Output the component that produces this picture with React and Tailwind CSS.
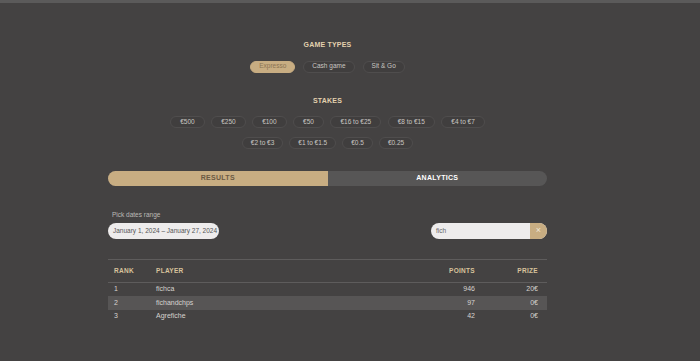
const gameTypes = ["Expresso", "Cash game", "Sit & Go"];
const stakesTop = ["€500", "€250", "€100", "€50", "€16 to €25", "€8 to €15", "€4 to €7"];
const stakesBottom = ["€2 to €3", "€1 to €1.5", "€0.5", "€0.25"];

const rows = [
  { rank: 1, player: "fichca", points: 946, prize: "20€" },
  { rank: 2, player: "fichandchps", points: 97, prize: "0€" },
  { rank: 3, player: "Agrefiche", points: 42, prize: "0€" },
];

function Pill({ label, active, wide }) {
  return (
    <button
      type="button"
      className={`h-[12px] rounded-full border text-[6.5px] leading-none ${wide ? "px-[9px]" : "px-[8px]"} ${
        active
          ? "bg-[#c8ad82] border-[#c8ad82] text-[#8a7352]"
          : "bg-[#403e3e] border-[#4f4d4d] text-[#c9c6c2]"
      }`}
    >
      {label}
    </button>
  );
}

export default function App() {
  return (
    <div
      className="w-[700px] h-[361px] bg-[#444242] overflow-hidden"
      style={{ fontFamily: "'Liberation Sans', Arial, sans-serif" }}
    >
      {/* top strip */}
      <div className="h-[3px] bg-[#5b5a5a]" />

      <div className="ml-[108px] w-[439px] flex flex-col">
        {/* Game types */}
        <h3 className="mt-[37px] text-center text-[7px] font-black tracking-[0.2px] text-[#e3d1ae]">
          GAME TYPES
        </h3>
        <div className="mt-[10px] flex justify-center gap-[8px]">
          {gameTypes.map((g, i) => (
            <Pill key={g} label={g} active={i === 0} />
          ))}
        </div>

        {/* Stakes */}
        <h3 className="mt-[23px] text-center text-[7px] font-black tracking-[0.2px] text-[#e3d1ae]">
          STAKES
        </h3>
        <div className="mt-[10px] flex justify-center gap-[6.5px]">
          {stakesTop.map((s) => (
            <Pill key={s} label={s} wide />
          ))}
        </div>
        <div className="mt-[9px] flex justify-center gap-[6px]">
          {stakesBottom.map((s) => (
            <Pill key={s} label={s} />
          ))}
        </div>

        {/* Tabs */}
        <div className="mt-[22px] flex h-[15px] rounded-full overflow-hidden bg-[#575656]">
          <button
            type="button"
            className="w-1/2 bg-[#c8ad82] text-[7px] font-black tracking-[0.3px] text-[#6b5a44]"
          >
            RESULTS
          </button>
          <button
            type="button"
            className="w-1/2 text-[7px] font-black tracking-[0.3px] text-white"
          >
            ANALYTICS
          </button>
        </div>

        {/* Filters */}
        <div className="mt-[24px] flex items-end justify-between">
          <div className="flex flex-col">
            <label className="ml-[4px] text-[6.5px] text-[#bdbab6]">Pick dates range</label>
            <div className="mt-[3px] h-[16px] w-[111px] flex items-center px-[5px] rounded-full bg-[#eeecec] text-[6.5px] text-[#555] whitespace-nowrap">
              January 1, 2024 – January 27, 2024
            </div>
          </div>
          <div className="flex h-[16px] w-[116px] rounded-full overflow-hidden bg-[#eeecec]">
            <div className="flex-1 flex items-center px-[5px] text-[6.5px] text-[#666]">fich</div>
            <div className="w-[17px] flex items-center justify-center bg-[#c8ad82] text-[9px] text-[#f0e6d4]">
              ×
            </div>
          </div>
        </div>

        {/* Table */}
        <div className="mt-[20px] border-t border-[#5e5c5c]">
          <div className="flex items-center h-[23px] border-b border-[#5e5c5c] text-[6.5px] font-black tracking-[0.3px] text-[#d8c39c]">
            <div className="w-[48px] pl-[6px]">RANK</div>
            <div className="flex-1">PLAYER</div>
            <div className="w-[60px] text-right">POINTS</div>
            <div className="w-[72px] text-right pr-[9px]">PRIZE</div>
          </div>
          {rows.map((r) => (
            <div
              key={r.rank}
              className={`flex items-center h-[13.5px] text-[7px] text-[#d6d3cf] ${
                r.rank === 2 ? "bg-[#575555]" : ""
              }`}
            >
              <div className="w-[48px] pl-[6px]">{r.rank}</div>
              <div className="flex-1">{r.player}</div>
              <div className="w-[60px] text-right">{r.points}</div>
              <div className="w-[72px] text-right pr-[9px]">{r.prize}</div>
            </div>
          ))}
        </div>
      </div>
    </div>
  );
}
